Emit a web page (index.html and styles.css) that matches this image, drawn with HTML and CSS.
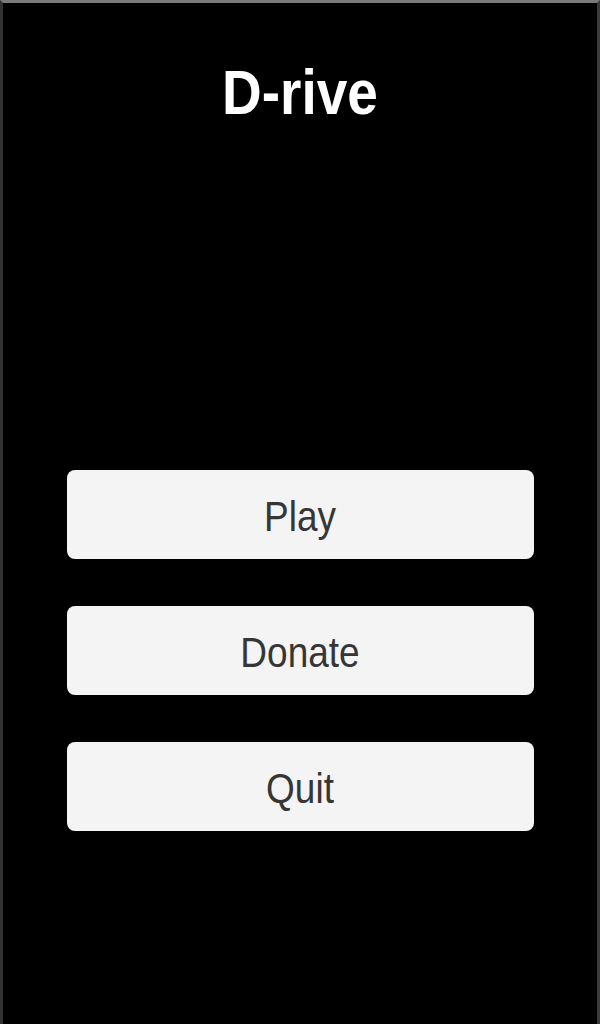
FILE: index.html
```html
<!DOCTYPE html>
<html lang="en">
<head>
<meta charset="utf-8">
<title>D-rive</title>
<link rel="stylesheet" href="styles.css">
</head>
<body>
<div class="screen">
  <h1 class="title"><span class="stretch">D-rive</span></h1>
  <nav class="menu">
    <button class="btn"><span class="stretch">Play</span></button>
    <button class="btn"><span class="stretch">Donate</span></button>
    <button class="btn"><span class="stretch">Quit</span></button>
  </nav>
</div>
</body>
</html>
```
FILE: styles.css
```css
html, body {
  margin: 0;
  padding: 0;
  background: #000;
}
.screen {
  width: 600px;
  height: 1024px;
  box-sizing: border-box;
  background: #000;
  border-top: 3px solid #7a7a7a;
  border-left: 3px solid #333;
  border-right: 3px solid #3a3a3a;
  display: flex;
  flex-direction: column;
  align-items: center;
}
.stretch {
  display: inline-block;
  transform: scaleY(1.13);
}
.title {
  margin: 63px 0 0;
  font-family: "Liberation Sans", Arial, sans-serif;
  font-weight: bold;
  font-size: 55px;
  line-height: 55px;
  color: #fff;
}
.menu {
  margin-top: 349px;
  display: flex;
  flex-direction: column;
  gap: 47px;
}
.btn {
  width: 467px;
  height: 89px;
  border: none;
  border-radius: 8px;
  background: #f4f4f4;
  color: #363636;
  font-family: "Liberation Sans", Arial, sans-serif;
  font-size: 37px;
  padding: 4px 0 0;
  display: flex;
  align-items: center;
  justify-content: center;
}
```
